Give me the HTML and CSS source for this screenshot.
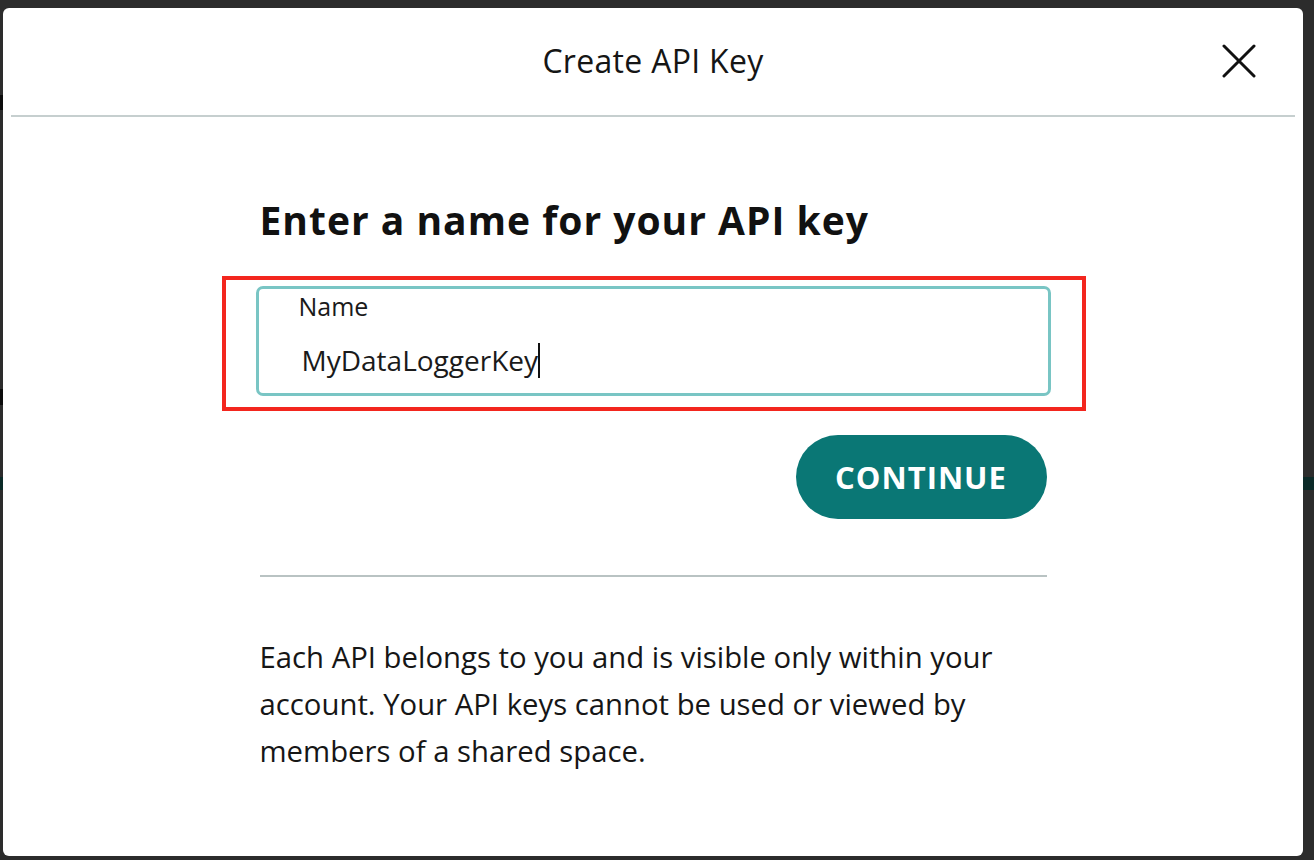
FILE: index.html
```html
<!DOCTYPE html>
<html lang="en">
<head>
<meta charset="utf-8">
<title>Create API Key</title>
<link rel="stylesheet" href="styles.css">
</head>
<body>
<div class="backdrop">
  <span class="bg-bit bg-bit-a"></span>
  <span class="bg-bit bg-bit-b"></span>
  <span class="bg-bit bg-bit-c"></span>
  <span class="bg-bit bg-bit-d"></span>
  <div class="modal">
    <header class="modal-header">
      <h1 class="modal-title">Create API Key</h1>
      <button class="close-btn" aria-label="Close">
        <svg width="34" height="34" viewBox="0 0 34 34" fill="none" stroke="#111" stroke-width="3" stroke-linecap="round">
          <path d="M2 2 L32 32 M32 2 L2 32"/>
        </svg>
      </button>
    </header>
    <div class="modal-body">
      <h2 class="heading">Enter a name for your API key</h2>
      <div class="field-wrap">
        <div class="field">
          <span class="field-label">Name</span>
          <span class="field-value">MyDataLoggerKey<span class="caret"></span></span>
        </div>
        <span class="annotation"></span>
      </div>
      <div class="actions">
        <button class="continue-btn">CONTINUE</button>
      </div>
      <div class="divider"></div>
      <p class="info">Each API belongs to you and is visible only within your account. Your API keys cannot be used or viewed by members of a shared space.</p>
    </div>
  </div>
</div>
</body>
</html>
```

FILE: styles.css
```css
* { box-sizing: border-box; }
html, body { margin: 0; padding: 0; }
body {
  width: 1314px;
  height: 860px;
  overflow: hidden;
  background: #2c2c2c;
  font-family: "Open Sans", "Noto Sans", sans-serif;
  color: #111;
}
.backdrop {
  position: relative;
  width: 1314px;
  height: 860px;
  padding: 8px 11px 4px 3px;
}
.bg-bit { position: absolute; display: block; }
.bg-bit-a { left: 0; top: 95px; width: 3px; height: 15px; background: #0c0c0c; }
.bg-bit-b { left: 0; top: 389px; width: 3px; height: 16px; background: #0c0c0c; }
.bg-bit-c { left: 0; top: 477px; width: 3px; height: 13px; background: #0b2a28; }
.bg-bit-d { right: 0; top: 477px; width: 11px; height: 13px; background: #0b2a28; }
.modal {
  width: 1300px;
  height: 848px;
  background: #fff;
  border-radius: 6px;
  display: flex;
  flex-direction: column;
}
.modal-header {
  position: relative;
  height: 109px;
  margin: 0 8px;
  border-bottom: 2px solid #c6cfcf;
  display: flex;
  align-items: center;
  justify-content: center;
}
.modal-title {
  margin: 0;
  font-size: 32px;
  font-weight: 400;
  letter-spacing: 0.3px;
  line-height: 44px;
  padding-bottom: 1px;
  color: #151515;
}
.close-btn {
  position: absolute;
  right: 39px;
  top: 36px;
  width: 34px;
  height: 34px;
  padding: 0;
  border: 0;
  background: none;
}
.close-btn svg { display: block; }
.modal-body {
  width: 787px;
  margin: 0 auto;
  padding-top: 79px;
}
.heading {
  margin: 0;
  font-size: 39px;
  font-weight: 700;
  letter-spacing: 1px;
  line-height: 48px;
  color: #111;
}
.field-wrap {
  position: relative;
  margin: 42px -4px 0 -4px;
}
.field {
  height: 110px;
  border: 3px solid #79c5c4;
  border-radius: 7px;
  padding: 2px 0 0 40px;
  display: flex;
  flex-direction: column;
}
.field-label {
  font-size: 25px;
  line-height: 30px;
  color: #1a1a1a;
}
.field-value {
  margin-top: 19px;
  margin-left: 3px;
  font-size: 28px;
  line-height: 40px;
  color: #1a1a1a;
  display: flex;
  align-items: center;
}
.caret {
  display: inline-block;
  width: 2px;
  height: 35px;
  background: #111;
}
.annotation {
  position: absolute;
  left: -34px;
  top: -10px;
  right: -35px;
  bottom: -15px;
  border: 4px solid #f3261e;
  pointer-events: none;
}
.actions {
  display: flex;
  justify-content: flex-end;
  margin-top: 39px;
}
.continue-btn {
  width: 251px;
  height: 84px;
  border: 0;
  border-radius: 42px;
  background: #0a7775;
  color: #fff;
  font-family: "Open Sans", "Noto Sans", sans-serif;
  font-size: 31px;
  font-weight: 700;
  letter-spacing: 1px;
  padding: 0;
}
.divider {
  margin-top: 56px;
  height: 2px;
  background: #b9c3c3;
}
.info {
  margin: 57px 0 0;
  font-size: 29.3px;
  line-height: 47px;
  color: #161616;
}
```
